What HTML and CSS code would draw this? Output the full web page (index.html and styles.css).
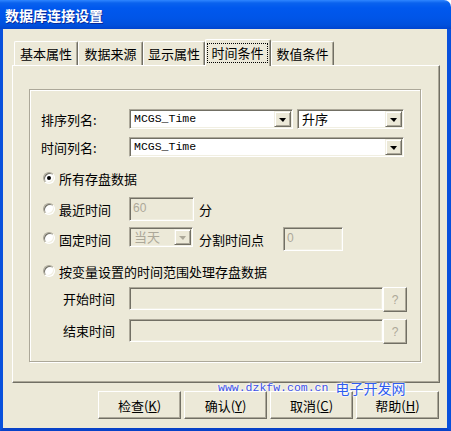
FILE: index.html
```html
<!DOCTYPE html>
<html lang="zh-CN">
<head>
  <meta charset="UTF-8" />
  <title>数据库连接设置</title>
  <link rel="stylesheet" href="styles.css">
</head>
<body>
  <div class="window">
    <div class="titlebar"><span class="title">数据库连接设置</span></div>

    <div class="client">
      <div class="tabs">
        <div class="tab t1">基本属性</div>
        <div class="tab t2">数据来源</div>
        <div class="tab t3">显示属性</div>
        <div class="tab active"><span class="focus">时间条件</span></div>
        <div class="tab t5">数值条件</div>
      </div>

      <div class="panel">
        <div class="group">
          <div class="row row-1">
            <span class="label">排序列名:</span>
            <div class="combo combo-sort">
              <span class="value mono">MCGS_Time</span>
              <span class="drop"><i class="arrow"></i></span>
            </div>
            <div class="combo combo-order">
              <span class="value">升序</span>
              <span class="drop"><i class="arrow"></i></span>
            </div>
          </div>

          <div class="row row-2">
            <span class="label">时间列名:</span>
            <div class="combo combo-time">
              <span class="value mono">MCGS_Time</span>
              <span class="drop"><i class="arrow"></i></span>
            </div>
          </div>

          <div class="opt opt-all">
            <span class="radio checked"></span>
            <span>所有存盘数据</span>
          </div>

          <div class="opt opt-recent">
            <span class="radio"></span>
            <span class="opt-label">最近时间</span>
            <div class="edit disabled edit-min">60</div>
            <span class="unit">分</span>
          </div>

          <div class="opt opt-fixed">
            <span class="radio"></span>
            <span class="opt-label">固定时间</span>
            <div class="combo disabled combo-day">
              <span class="value">当天</span>
              <span class="drop"><i class="arrow"></i></span>
            </div>
            <span class="unit">分割时间点</span>
            <div class="edit disabled edit-point">0</div>
          </div>

          <div class="opt opt-var">
            <span class="radio"></span>
            <span>按变量设置的时间范围处理存盘数据</span>
          </div>

          <div class="range range-start">
            <span class="range-label">开始时间</span>
            <div class="edit disabled edit-range"></div>
            <span class="btn-q">?</span>
          </div>

          <div class="range range-end">
            <span class="range-label">结束时间</span>
            <div class="edit disabled edit-range"></div>
            <span class="btn-q">?</span>
          </div>
        </div>
      </div>

      <div class="buttons">
        <button class="btn">检查(<u>K</u>)</button>
        <button class="btn">确认(<u>Y</u>)</button>
        <button class="btn">取消(<u>C</u>)</button>
        <button class="btn">帮助(<u>H</u>)</button>
      </div>
    </div>

    <div class="watermark">
      <span class="wm-url">www.dzkfw.com.cn</span>
      <span class="wm-name">电子开发网</span>
    </div>
  </div>
</body>
</html>
```

FILE: styles.css
```css
* { margin: 0; padding: 0; box-sizing: border-box; }

body {
  background: #fff;
  font-family: "Noto Sans CJK SC", "Noto Sans", sans-serif;
  font-size: 13px;
  color: #000;
}

.window {
  position: relative;
  width: 451px;
  height: 431px;
  display: flex;
  flex-direction: column;
}

/* Title bar */
.titlebar {
  height: 29px;
  flex: none;
  border-top-right-radius: 7px;
  background: linear-gradient(#2f86ff 0, #0a62ee 3px, #0058ee 8px, #0055e8 18px, #0050dc 25px, #0044cf 29px);
  display: flex;
  align-items: center;
  padding-left: 5px;
}

.title {
  color: #fff;
  font-weight: bold;
  font-size: 14px;
  line-height: 14px;
  margin-top: 1px;
  text-shadow: 1px 1px 0 #0a2a9a;
}

.client {
  flex: 1;
  background: #ece9d8;
  border-left: 3px solid #0850dc;
  border-right: 4px solid #0850dc;
  border-bottom: 3px solid #0842c8;
  display: flex;
  flex-direction: column;
}

/* Tabs */
.tabs {
  display: flex;
  align-items: flex-end;
  height: 36px;
  padding-top: 10px;
  padding-left: 11px;
}

.tab {
  flex: none;
  height: 24px;
  display: flex;
  align-items: center;
  justify-content: center;
  background: #ece9d8;
  border-top: 1px solid #fff;
  border-left: 1px solid #fff;
  border-right: 1px solid #716f64;
  box-shadow: inset -1px 0 0 #aca899;
  border-top-left-radius: 2px;
  border-top-right-radius: 2px;
}

.t1 { width: 64px; }
.t2 { width: 65px; }
.t3 { width: 62px; }
.t5 { width: 63px; }

.tab.active {
  position: relative;
  z-index: 1;
  width: 66px;
  height: 27px;
  margin-bottom: -1px;
  padding: 3px 2px 3px 1px;
  align-items: stretch;
}

.focus {
  flex: 1;
  display: flex;
  align-items: center;
  justify-content: center;
  border: 1px dotted #000;
  padding-bottom: 2px;
}

/* Panel */
.panel {
  margin-left: 9px;
  width: 428px;
  height: 318px;
  border-top: 1px solid #fff;
  border-left: 1px solid #fff;
  border-right: 1px solid #716f64;
  border-bottom: 1px solid #716f64;
  box-shadow: inset -1px -1px 0 #aca899;
  padding: 23px 0 0 16px;
}

.group {
  width: 392px;
  height: 273px;
  border: 1px solid #aca899;
  box-shadow: 1px 1px 0 #fff, inset 1px 1px 0 #fff;
  padding: 19px 0 0 11px;
  display: flex;
  flex-direction: column;
}

.row {
  display: flex;
  align-items: center;
  height: 20px;
}

.row-2 { margin-top: 8px; }

.label {
  width: 88px;
  flex: none;
}

/* Combo boxes */
.combo {
  height: 20px;
  flex: none;
  display: flex;
  align-items: stretch;
  background: #fff;
  border-top: 1px solid #aca899;
  border-left: 1px solid #aca899;
  border-right: 1px solid #fff;
  border-bottom: 1px solid #fff;
  box-shadow: inset 1px 1px 0 #716f64, inset -1px -1px 0 #f1efe2;
  padding: 1px;
}

.combo-sort { width: 164px; }
.combo-order { width: 107px; margin-left: 4px; }
.combo-time { width: 275px; }
.combo-day { width: 64px; }

.value {
  flex: 1;
  line-height: 16px;
  padding-left: 3px;
  white-space: nowrap;
}

.mono {
  font-family: "Liberation Mono", monospace;
  font-size: 11.5px;
}

.drop {
  width: 17px;
  flex: none;
  background: #ece9d8;
  border-top: 1px solid #f1efe2;
  border-left: 1px solid #f1efe2;
  border-right: 1px solid #716f64;
  border-bottom: 1px solid #716f64;
  box-shadow: inset 1px 1px 0 #fff, inset -1px -1px 0 #aca899;
  display: flex;
  align-items: center;
  justify-content: center;
}

.arrow {
  width: 0;
  height: 0;
  border-left: 4px solid transparent;
  border-right: 3px solid transparent;
  border-top: 4px solid #000;
  margin-top: 1px;
}

.combo.disabled { background: #ece9d8; }
.combo.disabled .value { color: #aca899; }
.combo.disabled .arrow { border-top-color: #aca899; }

/* Radio options */
.opt {
  display: flex;
  align-items: center;
  margin-left: 2px;
}

.opt-all { margin-top: 14px; height: 14px; }
.opt-recent { margin-top: 12px; height: 24px; }
.opt-fixed { margin-top: 6px; height: 24px; align-items: flex-start; }
.opt-var { margin-top: 13px; height: 14px; }

.radio {
  width: 12px;
  height: 12px;
  flex: none;
  margin-right: 4px;
  border-radius: 50%;
  background: #fff;
  border: 1px solid;
  border-color: #aca899 #fff #fff #aca899;
  box-shadow: inset 1px 1px 0 #716f64, inset -1px -1px 0 #f1efe2;
  display: flex;
  align-items: center;
  justify-content: center;
}

.radio.checked::after {
  content: "";
  width: 4px;
  height: 4px;
  border-radius: 50%;
  background: #000;
}

.opt-label {
  width: 70px;
  flex: none;
}

.opt-fixed .radio { margin-top: 5px; }
.opt-fixed .opt-label { margin-top: 3px; }

.unit { margin-left: 5px; }

.opt-fixed .unit {
  margin-left: 6px;
  margin-top: 3px;
  width: 84px;
  flex: none;
}

/* Edit boxes */
.edit {
  height: 24px;
  flex: none;
  background: #fff;
  border-top: 1px solid #aca899;
  border-left: 1px solid #aca899;
  border-right: 1px solid #fff;
  border-bottom: 1px solid #fff;
  box-shadow: inset 1px 1px 0 #716f64, inset -1px -1px 0 #f1efe2;
  padding: 3px 0 0 3px;
  line-height: 15px;
}

.edit.disabled {
  background: #ece9d8;
  color: #aca899;
  font-family: "Liberation Sans", sans-serif;
  font-size: 12px;
}

.edit-min { width: 65px; }
.edit-point { width: 60px; }

/* Time range rows */
.range {
  display: flex;
  align-items: flex-start;
  height: 25px;
}

.range-start { margin-top: 9px; }
.range-end { margin-top: 7px; }

.range-label {
  margin-left: 22px;
  width: 66px;
  flex: none;
  line-height: 23px;
}

.edit-range {
  width: 254px;
  height: 23px;
}

.btn-q {
  width: 24px;
  height: 25px;
  background: #ece9d8;
  border-top: 1px solid #fff;
  border-left: 1px solid #fff;
  border-right: 1px solid #716f64;
  border-bottom: 1px solid #716f64;
  box-shadow: inset -1px -1px 0 #aca899;
  color: #aca899;
  font-family: "Liberation Sans", sans-serif;
  font-size: 12px;
  display: flex;
  align-items: center;
  justify-content: center;
}

/* Dialog buttons */
.buttons {
  display: flex;
  justify-content: flex-end;
  gap: 3px;
  margin-top: 8px;
  padding-right: 8px;
}

.btn {
  width: 83px;
  height: 28px;
  font-family: "Noto Sans CJK SC", sans-serif;
  font-size: 13px;
  color: #000;
  background: #ece9d8;
  border-top: 1px solid #fff;
  border-left: 1px solid #fff;
  border-right: 1px solid #716f64;
  border-bottom: 1px solid #716f64;
  box-shadow: inset -1px -1px 0 #aca899;
  padding-top: 1px;
}

.btn u { text-decoration: underline; }

/* Watermark overlay */
.watermark {
  position: absolute;
  left: 218px;
  top: 381px;
  height: 14px;
  display: flex;
  align-items: center;
  gap: 7px;
  pointer-events: none;
}

.wm-url {
  font-family: "Liberation Mono", monospace;
  font-size: 11.5px;
  line-height: 12px;
  color: #3a4fe6;
  text-shadow: 0 0 2px #fff, 0 0 2px #fff, 0 0 3px #fff;
}

.wm-name {
  font-size: 14px;
  line-height: 14px;
  color: #2f5cf0;
  text-shadow: 0 0 2px #fff, 0 0 2px #fff, 0 0 3px #fff;
}
```
